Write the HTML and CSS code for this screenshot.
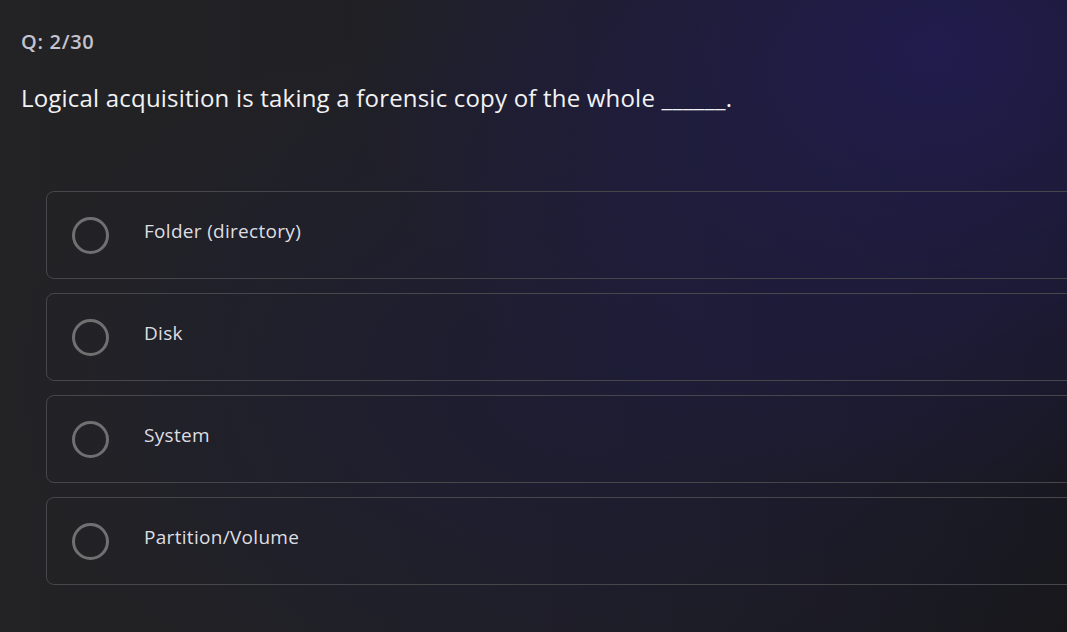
FILE: index.html
```html
<!DOCTYPE html>
<html>
<head>
<meta charset="utf-8">
<link rel="stylesheet" href="styles.css">
</head>
<body>
<main class="quiz">
  <div class="counter">Q: 2/30</div>
  <h1 class="question">Logical acquisition is taking a forensic copy of the whole ______.</h1>
  <ul class="options">
    <li class="option"><span class="radio"></span><span class="label">Folder (directory)</span></li>
    <li class="option"><span class="radio"></span><span class="label">Disk</span></li>
    <li class="option"><span class="radio"></span><span class="label">System</span></li>
    <li class="option"><span class="radio"></span><span class="label">Partition/Volume</span></li>
  </ul>
</main>
</body>
</html>
```

FILE: styles.css
```css
html, body {
  margin: 0;
  height: 100%;
}
body {
  overflow: hidden;
  font-family: "Open Sans", "Noto Sans", sans-serif;
  background:
    radial-gradient(ellipse 55% 70% at 88% 8%, rgba(33, 28, 80, 0.95) 0%, rgba(33, 28, 80, 0) 100%),
    radial-gradient(ellipse 60% 60% at 60% 60%, rgba(30, 28, 60, 0.7) 0%, rgba(30, 28, 60, 0) 100%),
    linear-gradient(90deg, #232325 0%, #1f1f24 50%, #17171a 100%);
}
.quiz {
  padding: 30px 0 0 21px;
}
.counter {
  color: #c4c3cf;
  font-size: 20px;
  font-weight: 600;
  line-height: 24px;
  letter-spacing: 0.7px;
}
.question {
  margin: 29px 0 0;
  color: #f2f2f4;
  font-size: 24px;
  font-weight: 500;
  line-height: 30px;
  letter-spacing: 0.2px;
}
.options {
  list-style: none;
  margin: 78px -40px 0 25px;
  padding: 0;
  display: flex;
  flex-direction: column;
  gap: 14px;
}
.option {
  height: 86px;
  border: 1px solid #46464b;
  border-radius: 8px;
  display: flex;
  align-items: center;
  padding-left: 25px;
}
.radio {
  width: 31px;
  height: 31px;
  border: 3px solid #707072;
  border-radius: 50%;
  flex: none;
}
.label {
  margin-left: 35px;
  margin-bottom: 8px;
  color: #dedee2;
  font-size: 19px;
  font-weight: 500;
  letter-spacing: 0.3px;
}
```
